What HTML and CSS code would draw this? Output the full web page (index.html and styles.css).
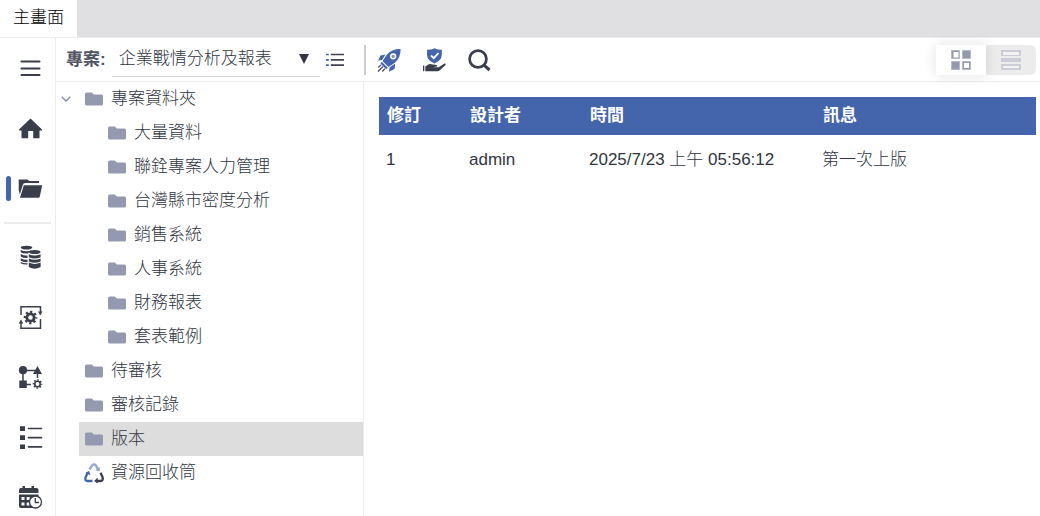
FILE: index.html
```html
<!DOCTYPE html>
<html lang="zh-Hant">
<head>
<meta charset="utf-8">
<meta name="viewport" content="width=device-width, initial-scale=1">
<title>主畫面</title>
<link rel="stylesheet" href="styles.css">
</head>
<body>
<svg class="defs" aria-hidden="true">
  <symbol id="folder" viewBox="0 0 18 14"><path d="M1.5 0.5H6.8L8.8 2.5H16.5Q18 2.5 18 4V12Q18 13.5 16.500 13.500H1.500Q0 13.500 0 12V2Q0 0.500 1.500 0.500Z" fill="#9599b0"/></symbol>
</svg>
<header class="tabs"><a class="tab" href="#main" aria-current="page">主畫面</a></header>
<div class="app">
  <nav class="rail" aria-label="主選單">
    <button class="rail-btn" aria-label="選單"><svg class="icon" viewBox="0 0 24 24"><path d="M3.500 5.500H21.500M3.500 12.500H21.500M3.500 19H21.500" fill="none" stroke="currentColor" stroke-width="2" stroke-linecap="round"/></svg></button>
    <button class="rail-btn" aria-label="首頁"><svg class="icon" viewBox="0 0 24 24"><path d="M12.500 2.500L24 13.500V14.500H21.500V22.300H15.200V15H10.200V22.300H3.500V14.500H1V13.500Z" fill="currentColor"/></svg></button>
    <button class="rail-btn active" aria-label="專案" aria-current="true"><svg class="icon" viewBox="0 0 24 24"><path d="M.7 3.500H9.300L11.500 5H21V7H7.300Q5.400 7 4.800 9L1.800 18.500L.7 14Z" fill="currentColor"/><path d="M5.800 9.200H24.200L21.800 20.500Q21.500 21.800 20.500 21.800H2Z" fill="currentColor"/></svg></button>
    <hr class="rail-line">
    <button class="rail-btn" aria-label="資料庫"><svg class="icon" viewBox="0 0 24 24"><g fill="currentColor"><ellipse cx="8.500" cy="2.600" rx="5.800" ry="1.900"/><path d="M2.700 5Q8 7.500 14 5.200L10.500 7.600V8.500Q5 9 2.700 7.300ZM2.700 9Q6 10.800 9.500 10.500V13Q5 13.200 2.700 11.500ZM2.700 13.200Q6 15 9.500 14.700V17.200Q5 17.400 2.700 15.800ZM2.700 17Q6 18.500 9.500 18.300V19.600Q5 19.800 2.700 18.300Z"/><ellipse cx="16.700" cy="7" rx="5.900" ry="2"/><path d="M10.800 9.200Q16.700 11.800 22.600 9.200V12.200Q16.700 14.700 10.800 12.200ZM10.800 13.400Q16.700 16 22.600 13.400V16.400Q16.700 18.900 10.800 16.400ZM10.800 17.600Q16.700 20.200 22.600 17.600V22Q16.700 25.600 10.800 22Z"/></g></svg></button>
    <button class="rail-btn" aria-label="排程設定"><svg class="icon" viewBox="0 0 24 24"><g fill="none" stroke="currentColor"><path d="M3 10V1.800H22.500V7M22.500 14V23.300H3V18" stroke-width="1.500"/><circle cx="12.500" cy="12.500" r="3.700" stroke-width="2.800"/><circle cx="12.500" cy="12.500" r="5.700" stroke-width="2.200" stroke-dasharray="2.240 2.237" stroke-dashoffset="1.120"/></g><path d="M20 6.500H24.500L22.250 10.500ZM.7 18.500H5.300L3 14.500Z" fill="currentColor"/></svg></button>
    <button class="rail-btn" aria-label="流程設定"><svg class="icon" viewBox="0 0 24 24"><g fill="none" stroke="currentColor" stroke-width="1.500"><path d="M5 5V17M8 5.500H18M8 19.500H13M19.500 9V13"/><circle cx="19.500" cy="19" r="2.700" stroke-width="1.600"/><circle cx="19.500" cy="19" r="4" stroke-width="1.600" stroke-dasharray="1.570 1.571" stroke-dashoffset=".785"/></g><path d="M19.500 1L24 9H15ZM1.300 15.500H8.800V23H1.300Z" fill="currentColor"/><circle cx="5" cy="5.200" r="4.100" fill="currentColor"/></svg></button>
    <button class="rail-btn" aria-label="清單"><svg class="icon" viewBox="0 0 24 24"><path d="M2 1.200H7V6H2ZM2 10.300H7V15H2ZM2 19.500H7V24H2Z" fill="currentColor"/><path d="M10.500 3.500H23.500M10.500 12.700H23.500M10.500 21.800H23.500" stroke="currentColor" stroke-width="1.700" stroke-linecap="round"/></svg></button>
    <button class="rail-btn" aria-label="行事曆"><svg class="icon" viewBox="0 0 24 24"><path d="M1 8V5Q1 3 3 3H4.500V1H7V3H13.500V1H16V3H18.500Q20.500 3 20.500 5V8Z" fill="currentColor"/><path d="M1 9.500H20.500V23H3Q1 23 1 21Z" fill="currentColor"/><path d="M3.500 12H6.500V15H3.500ZM8.700 12H11.700V15H8.700ZM14 12H17V15H14ZM3.500 17.500H6.500V20.500H3.500ZM8.700 17.500H11.700V20.500H8.700Z" fill="#fff"/><circle cx="17.500" cy="17" r="6" fill="#fff" stroke="currentColor" stroke-width="1.300"/><path d="M17.300 13V17.500H21" fill="none" stroke="currentColor" stroke-width="1.300"/></svg></button>
  </nav>
  <div class="workspace">
    <div class="toolbar">
      <label class="project-label" for="project">專案:</label>
      <div class="project">
        <select id="project"><option>企業戰情分析及報表</option></select>
        <svg class="caret" viewBox="0 0 10 10" aria-hidden="true"><path d="M0 0H10L5 10Z" fill="#303541"/></svg>
      </div>
      <button class="tool list-tool" aria-label="專案清單"><svg class="list-icon" viewBox="0 0 18 14"><path d="M4.800 1.500H18M4.800 6.800H18M4.800 12.200H18" stroke="#414654" stroke-width="1.700"/><path d="M0 1.500H2.800M0 6.800H2.800M0 12.200H2.800" stroke="#4465ab" stroke-width="1.700"/></svg></button>
      <span class="separator"></span>
      <div class="actions">
        <button class="tool" aria-label="發佈"><svg class="icon" viewBox="0 0 24 24"><path d="M23.500 1Q24 9.500 17.500 15L11.500 19L5.500 13L10 6.500Q15.500.5 23.500 1Z" fill="#4465ab"/><path d="M8.500 6.500L3.500 7.500L1.200 12.500L5 12ZM18.200 15.500L17.500 21L12 23.800L12.500 19.500ZM4.700 13.700L11 20L9 21L3.500 15.500Z" fill="#4465ab"/><circle cx="16.200" cy="8.300" r="2.400" fill="#7891c5" stroke="#fff" stroke-width="1.500"/><path d="M1.300 19.500L4 16.800M1 23.500L6 18.500M5.200 23.500L8 20.700" stroke="#414654" stroke-width="1.200"/></svg></button>
        <button class="tool" aria-label="審核"><svg class="icon" viewBox="0 0 24 24"><path d="M5 1.800Q10 1.800 12.500.2Q15 1.800 19.800 1.800V7Q19.500 12.500 12.500 15.500Q5.300 12.500 5 7Z" fill="#4465ab"/><path d="M9 7.500L11.800 10.200L16.500 5" fill="none" stroke="#fff" stroke-width="1.800"/><path d="M1 17.500H2.300V23.300H1ZM3.300 18.500L6.800 16.300Q8 15.800 9.300 16.300L14.500 17Q15.800 17.500 14.800 18.500L11 19.300L16.800 19.200L22.500 15.500Q24.500 15.700 23.300 17.300L17.500 22.500Q16.800 23.300 15.500 23.300H3.300Z" fill="#3a3d4a"/></svg></button>
        <button class="tool" aria-label="搜尋"><svg class="icon" viewBox="0 0 24 24"><circle cx="11" cy="11" r="8.400" fill="none" stroke="#3a3d4a" stroke-width="2.700"/><path d="M17 17.200L22.500 22" stroke="#3a3d4a" stroke-width="3"/></svg></button>
      </div>
      <div class="views">
        <button class="view selected" aria-label="圖示檢視" aria-pressed="true"><svg class="view-icon" viewBox="0 0 20 20"><g stroke="#b4b7ca" stroke-width="1"><path d="M.5.5H8.500V8.500H.5Z" fill="#9599b0"/><path d="M11.500.5H19.500V8.500H11.500ZM.5 11.500H8.500V19.500H.5Z" fill="#9599b0"/><path d="M11.500 11.500H19.500V19.500H11.500Z" fill="#9599b0"/></g><path d="M2.500 2H7.500V7.500H2.500ZM13 13H18V18H13Z" fill="#fff"/></svg></button>
        <button class="view" aria-label="清單檢視" aria-pressed="false"><svg class="view-icon" viewBox="0 0 20 20"><path d="M0 0H20V6H0ZM0 8H20V12H0ZM0 14H20V20H0Z" fill="#cbccd5"/><path d="M2 2H18V5H2ZM2 16H18V18H2Z" fill="#f3f3f4"/></svg></button>
      </div>
    </div>
    <div class="content">
      <aside class="side">
        <ul class="tree">
          <li><button class="toggle" aria-label="收合" aria-expanded="true"><svg class="chevron" viewBox="0 0 10 6"><path d="M.8.8L5 5L9.200.8" fill="none" stroke="#8f94ad" stroke-width="1.600"/></svg></button><a class="node" href="#projects"><svg class="folder"><use href="#folder"/></svg>專案資料夾</a>
            <ul class="tree">
              <li><a class="node" href="#p1"><svg class="folder"><use href="#folder"/></svg>大量資料</a></li>
              <li><a class="node" href="#p2"><svg class="folder"><use href="#folder"/></svg>聯銓專案人力管理</a></li>
              <li><a class="node" href="#p3"><svg class="folder"><use href="#folder"/></svg>台灣縣市密度分析</a></li>
              <li><a class="node" href="#p4"><svg class="folder"><use href="#folder"/></svg>銷售系統</a></li>
              <li><a class="node" href="#p5"><svg class="folder"><use href="#folder"/></svg>人事系統</a></li>
              <li><a class="node" href="#p6"><svg class="folder"><use href="#folder"/></svg>財務報表</a></li>
              <li><a class="node" href="#p7"><svg class="folder"><use href="#folder"/></svg>套表範例</a></li>
            </ul>
          </li>
          <li><a class="node" href="#pending"><svg class="folder"><use href="#folder"/></svg>待審核</a></li>
          <li><a class="node" href="#history"><svg class="folder"><use href="#folder"/></svg>審核記錄</a></li>
          <li><a class="node current" href="#versions" aria-current="true"><svg class="folder"><use href="#folder"/></svg>版本</a></li>
          <li><a class="node" href="#trash"><svg class="recycle" viewBox="0 0 20 20"><g fill="none" stroke-width="2.300" stroke-linejoin="round"><path d="M5.500 6.500L8.300 2.200Q10 .4 11.700 2.200L14.500 6.800" stroke="#93a8d5"/><path d="M3.800 9.500L1.500 14.500Q.8 18 3.500 18H8.500" stroke="#4465ab"/><path d="M16.500 9.800L18.500 14Q19.500 18 16.500 18H12" stroke="#3a3d4a"/></g><path d="M15.500 4.500V8.300L11.800 7ZM1.500 10L5 8L6.300 12ZM13.500 14.800V20.300L10.300 18Z" fill="#3a3d4a" opacity=".5"/><path d="M15.500 4.500V8.300L11.800 7Z" fill="#93a8d5"/><path d="M1.500 10L5 8L6.300 12Z" fill="#4465ab"/><path d="M13.500 14.800V20.300L10.300 18Z" fill="#3a3d4a"/></svg>資源回收筒</a></li>
        </ul>
      </aside>
      <main class="main" id="main">
        <table class="versions">
          <thead><tr><th class="col-revision">修訂</th><th class="col-author">設計者</th><th class="col-time">時間</th><th>訊息</th></tr></thead>
          <tbody><tr><td>1</td><td>admin</td><td>2025/7/23 上午 05:56:12</td><td>第一次上版</td></tr></tbody>
        </table>
      </main>
    </div>
  </div>
</div>
</body>
</html>
```

FILE: styles.css
```css
* { box-sizing: border-box; }
body {
  margin: 0;
  height: 100vh;
  display: flex;
  flex-direction: column;
  overflow: hidden;
  background: #fff;
  color: #303541;
  font: 300 17px/24px "Liberation Sans", "Noto Sans CJK TC", sans-serif;
}
button { border: 0; padding: 0; background: none; color: inherit; font: inherit; cursor: pointer; }
a { color: inherit; text-decoration: none; }
svg { display: block; flex: none; }
.defs { position: absolute; width: 0; height: 0; }
.icon { width: 24px; height: 24px; overflow: visible; }

.tabs { display: flex; flex: none; background: #e0e0e2; border-bottom: 1px solid #ececec; }
.tab { padding: 6px 13px 7px; background: #fff; color: #000; }

.app { flex: 1; min-height: 0; display: flex; }
.rail { flex: none; width: 56px; border-right: 1px solid #ececec; color: #3a3d4a; overflow: hidden; }
.rail-btn { position: relative; display: flex; align-items: center; width: 100%; height: 60px; padding-left: 18px; }
.rail-btn.active::before {
  content: "";
  position: absolute;
  left: 6px;
  top: 18px;
  width: 5px;
  height: 25px;
  border-radius: 3px;
  background: #4465ab;
}
.rail-line { height: 2px; margin: 4px 4px 3px; border: 0; background: #ececec; }

.workspace { flex: 1; min-width: 0; display: flex; flex-direction: column; }
.toolbar { flex: none; display: flex; align-items: center; height: 44px; padding: 0 4px 0 10px; border-bottom: 1px solid #ececec; }
.project-label { font-weight: 700; color: #505461; }
.project { display: grid; align-items: center; width: 208px; margin-left: 6px; border-bottom: 1px solid #d8d8d8; }
.project select {
  grid-area: 1 / 1;
  height: 34px;
  padding: 0 30px 0 7px;
  border: 0;
  background: none;
  color: inherit;
  font: inherit;
  appearance: none;
}
.caret { grid-area: 1 / 1; justify-self: end; width: 10px; height: 10px; margin-right: 11px; pointer-events: none; }
.list-tool { margin-left: 6px; }
.list-icon { width: 18px; height: 14px; }
.separator { width: 2px; height: 30px; margin: 0 11px 0 20px; background: #ccc; }
.actions { display: flex; gap: 21px; }
.views { display: flex; margin-left: auto; }
.view { display: grid; place-items: center; width: 50px; height: 30px; border-radius: 0 6px 6px 0; background: #ececec; }
.view.selected { position: relative; border-radius: 0; background: #fff; box-shadow: 0 0 14px rgba(0, 0, 0, 0.12); }
.view-icon { width: 20px; height: 20px; }

.content { flex: 1; min-height: 0; display: flex; }
.side { flex: none; width: 308px; border-right: 1px solid #ececec; overflow: hidden; }
.tree { margin: 0; padding: 0; list-style: none; }
.tree li { display: grid; grid-template-columns: 23px 1fr; }
.toggle { display: grid; align-items: center; padding-left: 5px; }
.chevron { width: 10px; height: 6px; }
.node, .tree .tree { grid-column: 2; }
.node { display: flex; align-items: center; gap: 8px; height: 34px; padding-left: 6px; }
.node.current { background: #ddd; }
.folder { width: 18px; height: 14px; }
.recycle { width: 20px; height: 20px; margin: 0 -1px; }

.main { flex: 1; min-width: 0; padding: 15px 4px 0 15px; }
.versions { width: 100%; border-collapse: collapse; table-layout: fixed; text-align: left; }
.versions th { height: 38px; padding: 0 8px; background: #4465ab; color: #fff; font-weight: 700; }
.versions td { height: 50px; padding: 0 7px; }
.col-revision { width: 83px; }
.col-author { width: 120px; }
.col-time { width: 233px; }
```
